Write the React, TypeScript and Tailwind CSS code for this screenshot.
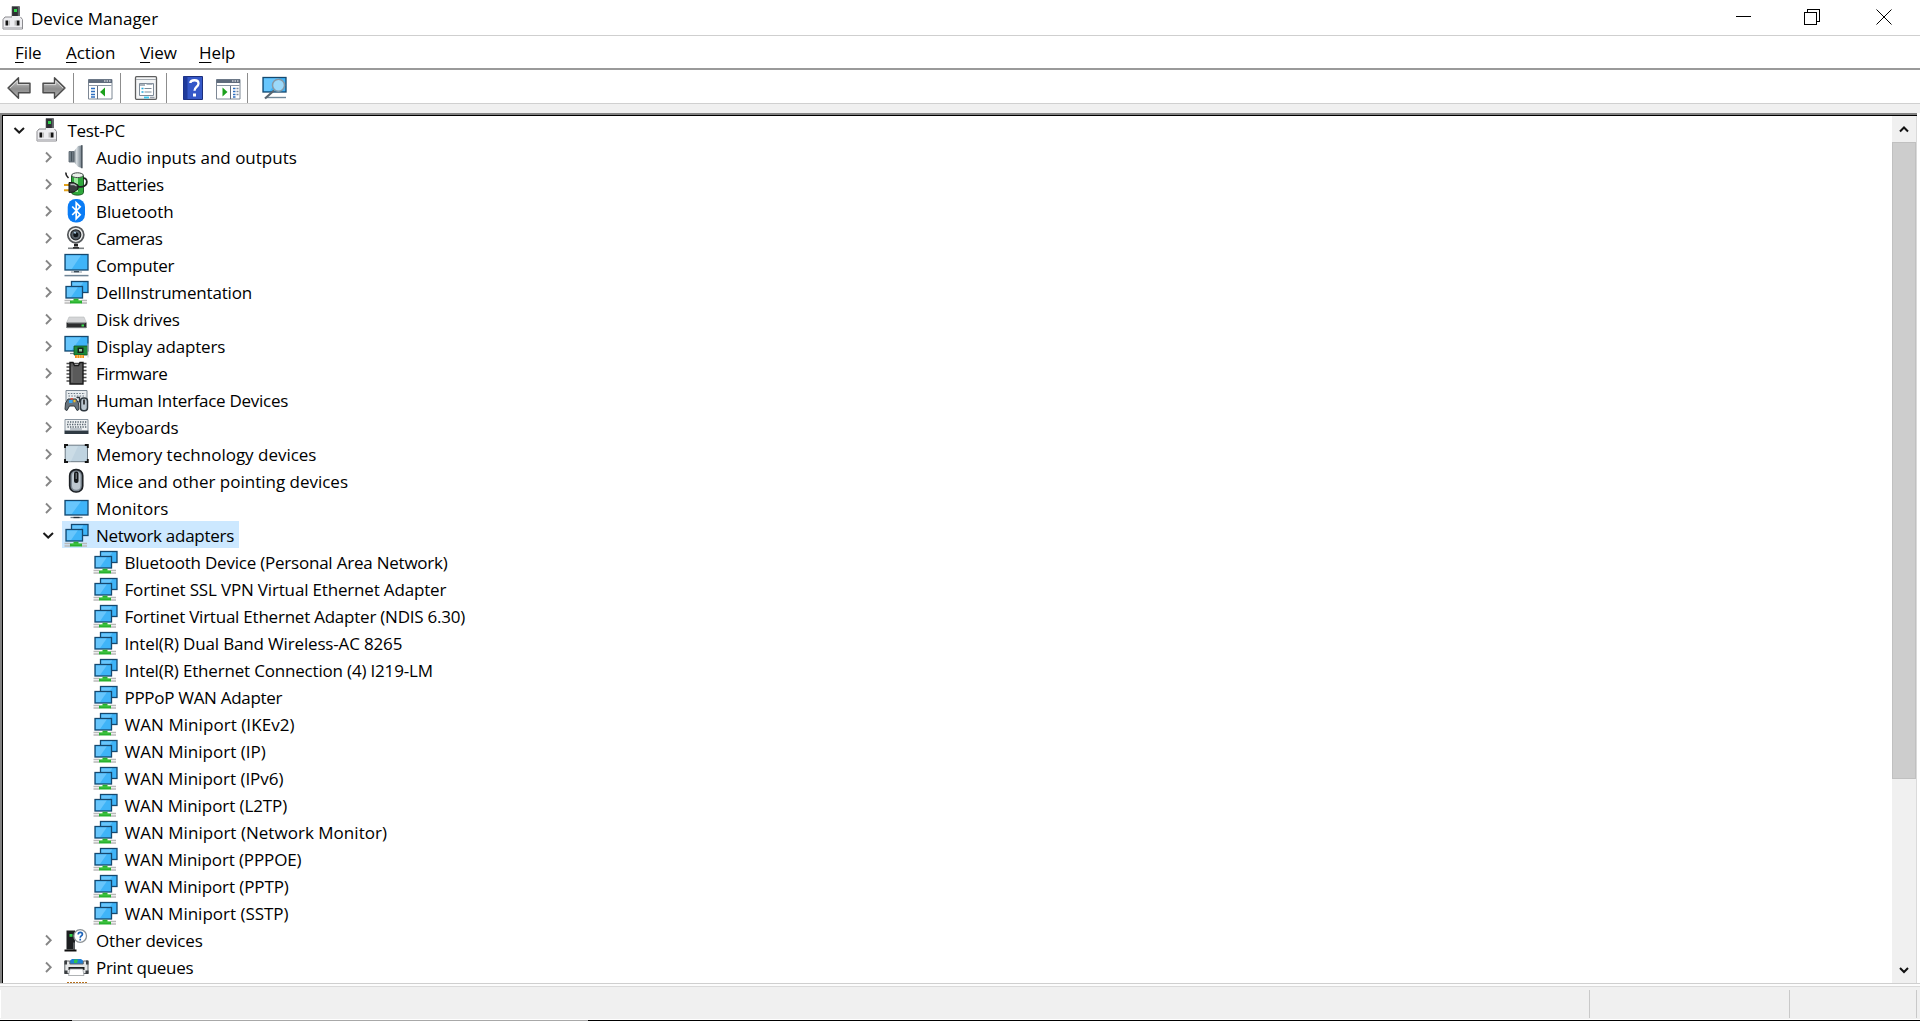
import React from 'react';

interface TreeItem {
  label: string;
  icon: React.FC;
  level: number;
  tracking: number;
  open?: boolean;
  selected?: boolean;
}

const Svg: React.FC<{ children: React.ReactNode; className?: string }> = ({ children, className = '' }) => (
  <svg viewBox="0 0 24 24" className={`h-6 w-6 shrink-0 overflow-visible ${className}`} fill="none">
    {children}
  </svg>
);

const PcIcon = () => (
  <Svg>
    <path d="M11 0.5h7.500v10.500h-7.500z" fill="#2e3033" stroke="#55585c" strokeWidth="0.6" />
    <path d="M16.800 1h1.700v9.500h-1.700z" fill="#5f6368" />
    <rect x="13" y="3" width="3" height="3" fill="#2fd24a" />
    <path d="M3.500 11h7.500v-1h8l2 2.500v10.500h-19v-9.500z" fill="#ededf0" />
    <path d="M11 11H4l-2 2.500v9.500h19.500v-9.500L19.500 11" stroke="#8b8b8f" />
    <path d="M2.500 21h18.500v2h-18.500z" fill="#c4c4c8" />
    <path d="M4.500 14.500h2.500v5h-2.500zM15.500 14.500h3v5h-3z" fill="#151515" />
    <path d="M7 14.500h2v5H7zM13.500 14.500h2v5h-2z" fill="#bdbdbd" />
  </Svg>
);

const AudioIcon = () => (
  <Svg>
    <defs>
      <linearGradient id="cone" x1="0" x2="1">
        <stop offset="0" stopColor="#69757e" />
        <stop offset="0.35" stopColor="#d8dee2" />
        <stop offset="0.7" stopColor="#98a3ab" />
        <stop offset="1" stopColor="#6d7881" />
      </linearGradient>
    </defs>
    <path d="M5 6.500h5v10.500H5z" fill="#7c8992" stroke="#55616a" strokeWidth="0.8" />
    <path d="M6.800 7h1.500v9.500H6.800z" fill="#46525b" />
    <path d="M9.500 7L14 1l4.300-.8v23l-4.300-1.500L9.500 16.500z" fill="url(#cone)" />
    <path d="M17.800 0.300v23" stroke="#4a545c" strokeWidth="1.400" />
    <path d="M9.800 7v9.500" stroke="#5a656d" strokeWidth="1" />
  </Svg>
);

const BatteryIcon = () => (
  <Svg>
    <path d="M7.500 4c0-3.500 12-3.500 12 0v16.500c0 3.500-12 3.500-12 0z" fill="#2fa83c" stroke="#1c5c25" />
    <path d="M10 5h4v15h-4z" fill="#9be89d" />
    <ellipse cx="13.500" cy="3.200" rx="5.800" ry="2.400" fill="#e8f1e8" stroke="#474b4d" />
    <path d="M14 14.500c5 1.500 9-1 8.800-5C22.600 6.500 21 6 19 6.200" stroke="#222" strokeWidth="1.800" />
    <path d="M2 0.500c-.5 2 0 3 2.500 5.500" stroke="#222" strokeWidth="1.500" />
    <path d="M0 13h5.500M0 18.200h5.500" stroke="#e2a11b" strokeWidth="2" />
    <path d="M5 10.500l5 .3 4 2.200v4l-4 3-5 .5z" fill="#3a3d3f" stroke="#151515" />
    <path d="M6.500 12.500h3.500l2.500 1.500" stroke="#b8bcbf" strokeWidth="1.300" />
  </Svg>
);

const BluetoothIcon = () => (
  <Svg>
    <rect x="3.700" y="0" width="17.300" height="23.500" rx="8" fill="#0a7cf5" />
    <path d="M8.200 7.500l8 8.200-4 4V3.800l4 4-8 8.200" stroke="#fff" strokeWidth="1.700" />
  </Svg>
);

const CameraIcon = () => (
  <Svg>
    <circle cx="11.800" cy="8.800" r="8" fill="#eceded" stroke="#55585b" strokeWidth="1.700" />
    <circle cx="11.800" cy="8.800" r="5" fill="#59626a" stroke="#25282b" strokeWidth="1.200" />
    <circle cx="11.800" cy="8.800" r="2.500" fill="#101418" />
    <path d="M10 6.500l2 .5" stroke="#a9cbe4" strokeWidth="1.500" />
    <path d="M10 17.800h4v2.700h-4z" fill="#222" />
    <path d="M4 22.300h16" stroke="#7c8083" strokeWidth="1.600" />
    <path d="M9 21.800h6" stroke="#222" strokeWidth="1.400" />
  </Svg>
);

const Screen: React.FC<{ x: number; y: number; w: number; h: number }> = ({ x, y, w, h }) => (
  <g>
    <rect x={x} y={y} width={w} height={h} fill="#3fb4f8" stroke="#15486e" strokeWidth="1.300" />
    <path d={`M${x + 1} ${y + 1}h${w * 0.65}l${-w * 0.4} ${h - 2}H${x + 1}z`} fill="#68c6fc" />
  </g>
);

const ComputerIcon = () => (
  <Svg>
    <Screen x={1} y={1.500} w={23} h={15.500} />
    <path d="M7 19h11" stroke="#8a97a1" strokeWidth="1" />
    <path d="M10 18.700h5" stroke="#2f3f4b" strokeWidth="1.200" />
    <path d="M0.500 22.600h24" stroke="#6f8496" strokeWidth="1.500" />
  </Svg>
);

const MonitorIcon = () => (
  <Svg>
    <Screen x={1} y={4.500} w={23} h={14.500} />
    <path d="M6.500 21.500h12" stroke="#75828c" strokeWidth="1.300" />
    <path d="M9.500 21.500h6" stroke="#29343c" strokeWidth="1.300" />
  </Svg>
);

const NetworkIcon = () => (
  <Svg>
    <Screen x={7.500} y={1.500} w={16.500} h={11} />
    <Screen x={2} y={6.500} w={16.500} h={11.500} />
    <path d="M0.500 20.500h6M17.500 20.500h5.500M0.500 23h6M17.500 23h5.500" stroke="#b9b9b9" strokeWidth="1.300" />
    <path d="M9.500 18.700h5v1.800H18v3H6v-3h3.500z" fill="#27b22f" />
    <path d="M7.500 21h9" stroke="#55d04f" strokeWidth="0.800" />
  </Svg>
);

const DiskIcon = () => (
  <Svg>
    <path d="M5 10h15l2.500 6H2.500z" fill="#d5d6d8" stroke="#b6b8ba" strokeWidth="0.600" />
    <path d="M2.500 15.700h20V21h-20z" fill="#2b2d2e" />
    <path d="M3 20.700h19" stroke="#86898b" strokeWidth="1" />
    <path d="M4 16.500h17" stroke="#5a5d5f" strokeWidth="0.800" />
    <rect x="17.500" y="17.500" width="2.500" height="2" fill="#3ce04e" />
  </Svg>
);

const DisplayIcon = () => (
  <Svg>
    <Screen x={1} y={2.500} w={23} h={14.500} />
    <path d="M6 19.500h5" stroke="#7f8c96" strokeWidth="1.200" />
    <path d="M10 12h13.500v9H10z" fill="#1e8a3a" stroke="#0d4f1f" strokeWidth="0.800" />
    <path d="M13.500 13.500h6v5.500h-6z" fill="#16241a" />
    <path d="M15 15h3v2.500h-3z" fill="#8fc69d" />
    <path d="M11 21h9v3h-9z" fill="#f08b1d" />
    <path d="M13.200 21v3M15.700 21v3M18 21v3" stroke="#fff0a8" strokeWidth="0.700" />
    <path d="M24 9.500v14" stroke="#c7c7c7" strokeWidth="1" />
  </Svg>
);

const FirmwareIcon = () => (
  <Svg>
    <path d="M2.500 2.500h20M2.500 6h20M2.500 9.500h20M2.500 13h20M2.500 16.500h20M2.500 20h20" stroke="#4f4f4f" strokeWidth="1.600" />
    <path d="M6 1.500h3l1.500 3h4l1.500-3h3V23H6z" fill="#5a5a5a" stroke="#191919" strokeWidth="1.400" />
    <path d="M8 5.500v15.500" stroke="#777" strokeWidth="1" />
  </Svg>
);

const HidIcon = () => (
  <Svg>
    <path d="M2 2.500h21v11H2z" fill="#e9edf0" stroke="#7b8792" />
    <path d="M4 5.500h17M4.500 8h17" stroke="#6b7883" strokeWidth="1.200" strokeDasharray="1.500 1.300" />
    <path d="M4 11h8l2.500 4 .5 6.500-2 1L10.500 18h-5L3 22.500l-2-1L1.500 15z" fill="#69747d" stroke="#2e373e" />
    <path d="M5 13.500h3.500" stroke="#38a7f0" strokeWidth="3" />
    <path d="M9.500 13h2" stroke="#f2bf2a" strokeWidth="2.500" />
    <path d="M6.500 10.800h2.500" stroke="#e8543b" strokeWidth="1.500" />
    <path d="M12.500 9.500h3v5" stroke="#2e373e" strokeWidth="1.300" />
    <rect x="16.500" y="10" width="7" height="12.700" rx="3" fill="#bac6cf" stroke="#2e373e" strokeWidth="1.500" />
    <path d="M20 11.500v5" stroke="#111" strokeWidth="1.500" />
  </Svg>
);

const KeyboardIcon = () => (
  <Svg>
    <path d="M1 4.500h23v11.500H1z" fill="#eef1f3" stroke="#8995a0" />
    <path d="M3.500 7h19" stroke="#56636e" strokeWidth="1.300" strokeDasharray="1.300 1.200" />
    <path d="M3 9.500h19" stroke="#56636e" strokeWidth="1.300" strokeDasharray="1.300 1.200" />
    <path d="M3.500 12h19" stroke="#56636e" strokeWidth="1.300" strokeDasharray="1.300 1.200" />
    <path d="M6 14h12" stroke="#8995a0" strokeWidth="1" />
    <path d="M0.500 15.700h24v3.300h-24z" fill="#2f3a43" />
  </Svg>
);

const MemoryIcon = () => (
  <Svg>
    <rect x="1.200" y="3.200" width="22.300" height="16.500" rx="1" fill="#bfd3e0" stroke="#6f7c86" />
    <path d="M2 4.200h12L7 19.200H2z" fill="#cbdce6" />
    <path d="M1 6V3h3M20.800 3h3v3M1 17v3h3M20.800 20h3v-3" stroke="#141414" strokeWidth="1.900" />
  </Svg>
);

const MouseIcon = () => (
  <Svg>
    <rect x="5.700" y="0.700" width="13" height="22.300" rx="6" fill="#7e8993" stroke="#1c2024" strokeWidth="1.700" />
    <rect x="8" y="2.700" width="8.500" height="18" rx="4" fill="#bdc7cf" />
    <rect x="10" y="2.500" width="4.500" height="11.500" rx="2" fill="#15181a" />
    <path d="M12.200 4v6" stroke="#8c969d" strokeWidth="1" />
  </Svg>
);

const OtherIcon = () => (
  <Svg>
    <path d="M2.500 2.500h8.500v19H2.500z" fill="#1c1e20" />
    <path d="M9 14.500h2v7H9z" fill="#5a5e61" />
    <path d="M0.500 21.500h12v2h-12z" fill="#0f0f0f" />
    <rect x="5.500" y="6" width="3" height="2.800" fill="#2fd24a" />
    <circle cx="16.200" cy="8" r="6.300" fill="#fff" stroke="#8c9296" strokeWidth="1.300" />
    <path d="M14.200 6.500c0-3 4.200-2.700 4.200-.3 0 1.700-2.200 1.800-2.200 3.500M16.200 10.800v1.700" stroke="#1c63b8" strokeWidth="1.700" />
  </Svg>
);

const PrinterIcon = () => (
  <Svg>
    <path d="M6 5.500L8 4h9l2 1.500V10H6z" fill="#1f7fd6" />
    <path d="M10 4.500h4L13 8h-3z" fill="#2fc44a" />
    <path d="M0.800 6h5v3h13.500V6h4.700v12.500h-23.200z" fill="#e5e7e8" stroke="#5e6468" strokeWidth="1" />
    <path d="M0.500 5.500h2.500v4H.5zM22 5.500h2.500v4H22zM0.500 15.500h3v3.500h-3zM21.500 15.500h3v3.500h-3z" fill="#3a3e41" />
    <path d="M4.500 12h16v3h-16z" fill="#1d1f20" />
    <path d="M6 14l-1.500 6.500h15.500L18.800 14z" fill="#fff" stroke="#9a9ea1" strokeWidth="0.800" />
  </Svg>
);

const items: TreeItem[] = [
  { label: 'Test-PC', icon: PcIcon, level: 0, tracking: -0.3, open: true },
  { label: 'Audio inputs and outputs', icon: AudioIcon, level: 1, tracking: -0.01 },
  { label: 'Batteries', icon: BatteryIcon, level: 1, tracking: -0.37 },
  { label: 'Bluetooth', icon: BluetoothIcon, level: 1, tracking: -0.08 },
  { label: 'Cameras', icon: CameraIcon, level: 1, tracking: -0.52 },
  { label: 'Computer', icon: ComputerIcon, level: 1, tracking: -0.22 },
  { label: 'DellInstrumentation', icon: NetworkIcon, level: 1, tracking: -0.18 },
  { label: 'Disk drives', icon: DiskIcon, level: 1, tracking: -0.2 },
  { label: 'Display adapters', icon: DisplayIcon, level: 1, tracking: -0.19 },
  { label: 'Firmware', icon: FirmwareIcon, level: 1, tracking: -0.45 },
  { label: 'Human Interface Devices', icon: HidIcon, level: 1, tracking: -0.28 },
  { label: 'Keyboards', icon: KeyboardIcon, level: 1, tracking: -0.17 },
  { label: 'Memory technology devices', icon: MemoryIcon, level: 1, tracking: -0.01 },
  { label: 'Mice and other pointing devices', icon: MouseIcon, level: 1, tracking: -0.01 },
  { label: 'Monitors', icon: MonitorIcon, level: 1, tracking: 0.12 },
  { label: 'Network adapters', icon: NetworkIcon, level: 1, tracking: -0.28, open: true, selected: true },
  { label: 'Bluetooth Device (Personal Area Network)', icon: NetworkIcon, level: 2, tracking: -0.22 },
  { label: 'Fortinet SSL VPN Virtual Ethernet Adapter', icon: NetworkIcon, level: 2, tracking: -0.17 },
  { label: 'Fortinet Virtual Ethernet Adapter (NDIS 6.30)', icon: NetworkIcon, level: 2, tracking: -0.23 },
  { label: 'Intel(R) Dual Band Wireless-AC 8265', icon: NetworkIcon, level: 2, tracking: -0.16 },
  { label: 'Intel(R) Ethernet Connection (4) I219-LM', icon: NetworkIcon, level: 2, tracking: -0.18 },
  { label: 'PPPoP WAN Adapter', icon: NetworkIcon, level: 2, tracking: -0.3 },
  { label: 'WAN Miniport (IKEv2)', icon: NetworkIcon, level: 2, tracking: 0.06 },
  { label: 'WAN Miniport (IP)', icon: NetworkIcon, level: 2, tracking: 0.02 },
  { label: 'WAN Miniport (IPv6)', icon: NetworkIcon, level: 2, tracking: -0.01 },
  { label: 'WAN Miniport (L2TP)', icon: NetworkIcon, level: 2, tracking: -0.08 },
  { label: 'WAN Miniport (Network Monitor)', icon: NetworkIcon, level: 2, tracking: 0.03 },
  { label: 'WAN Miniport (PPPOE)', icon: NetworkIcon, level: 2, tracking: -0.12 },
  { label: 'WAN Miniport (PPTP)', icon: NetworkIcon, level: 2, tracking: -0.1 },
  { label: 'WAN Miniport (SSTP)', icon: NetworkIcon, level: 2, tracking: -0.01 },
  { label: 'Other devices', icon: OtherIcon, level: 1, tracking: -0.2 },
  { label: 'Print queues', icon: PrinterIcon, level: 1, tracking: -0.3 },
];

const indents = ['pl-[8px]', 'pl-[36.5px]', 'pl-[65.5px]'];

const TreeRow: React.FC<{ item: TreeItem }> = ({ item }) => {
  const Icon = item.icon;
  return (
    <div className={`flex h-[27px] shrink-0 items-center ${indents[item.level]}`}>
      <div className="flex w-[22px] justify-center">
        {item.level < 2 && (
          <svg viewBox="0 0 14 14" className="-ml-[6px] h-3.5 w-3.5" fill="none">
            {item.open ? (
              <path d="M2.500 5l4.700 4.500L12 5" stroke="#1a1a1a" strokeWidth="2" />
            ) : (
              <path d="M5 2.500l4.700 4.700L5 12" stroke="#868686" strokeWidth="1.900" />
            )}
          </svg>
        )}
      </div>
      <div className={`flex h-full items-center pr-[5px] pl-[2px] ${item.selected ? 'bg-[#cce8ff]' : ''}`}>
        <div className="mt-px">
          <Icon />
        </div>
        <span
          className={`mt-0.5 whitespace-pre ${item.level === 2 ? 'ml-[8px]' : 'ml-[8.5px]'}`}
          style={{ letterSpacing: item.tracking }}
        >
          {item.label}
        </span>
      </div>
    </div>
  );
};

const MenuItem: React.FC<{ label: string; className: string }> = ({ label, className }) => (
  <div className={`whitespace-pre ${className}`}>
    <span className="underline decoration-1 underline-offset-[3px]">{label[0]}</span>
    {label.slice(1)}
  </div>
);

const Separator = () => <div className="h-[30px] w-px shrink-0 bg-[#8d8d8d]" />;

const Arrow: React.FC<{ flip?: boolean }> = ({ flip }) => (
  <svg viewBox="0 0 24 24" className={`h-6 w-6 shrink-0 ${flip ? '-scale-x-100' : ''}`} fill="none">
    <defs>
      <linearGradient id="arrow" x1="0" y1="0" x2="0" y2="1">
        <stop offset="0" stopColor="#c9c9c9" />
        <stop offset="0.55" stopColor="#8d8d8d" />
        <stop offset="1" stopColor="#b3b3b3" />
      </linearGradient>
    </defs>
    <path d="M1 12L11.500 1.800V7.300H23v9.400H11.500v5.500z" fill="url(#arrow)" stroke="#4c4c4c" strokeWidth="1.400" strokeLinejoin="round" />
    <path d="M3 12l7.300-7V8.600h11.500" stroke="#e4e4e4" strokeWidth="0.800" />
  </svg>
);

const ConsoleIcon: React.FC<{ right?: boolean }> = ({ right }) => (
  <Svg>
    <path d="M0.500 3.500h23.500v19.500H.5z" fill="#fff" stroke="#7d8794" />
    <path d="M0.500 3.500h23.500v3.500H.5z" fill="#5f6b7c" />
    <path d="M16 5h1.500M18.500 5H20M21 5h1.500" stroke="#fff" strokeWidth="1.200" />
    <path d="M1 9.500h22.500" stroke="#8b95a3" strokeWidth="1" />
    {right ? (
      <>
        <path d="M14.500 10v13" stroke="#5f6b7c" />
        <path d="M17 12.500h2.500M17 15.500h2.500M17 18.500h2.500M17 21h2.500" stroke="#2f6fc0" strokeWidth="1.300" />
        <path d="M20.500 12.500h2M20.500 15.500h2M20.500 18.500h2" stroke="#7f8b99" strokeWidth="1.300" />
        <path d="M6.500 11.500v9L11.500 16z" fill="#1ba01b" />
      </>
    ) : (
      <>
        <path d="M9.500 10v13" stroke="#5f6b7c" />
        <path d="M3 12.500h4M3 15.500h4M3 18.500h4M3 21h4" stroke="#2f6fc0" strokeWidth="1.300" />
        <path d="M17 11.500v9L12 16z" fill="#1ba01b" />
      </>
    )}
  </Svg>
);

const PropertiesIcon = () => (
  <Svg>
    <rect x="1.500" y="0.700" width="21" height="22.600" rx="1" fill="#f5f6f7" stroke="#5f5f5f" strokeWidth="1.300" />
    <path d="M2 3.500h20" stroke="#a7adb3" />
    <path d="M5.500 7.500h14v12h-14z" fill="#fff" stroke="#7f8b98" />
    <path d="M6 9h5M12.500 8h6" stroke="#8f99a5" strokeWidth="1.500" />
    <path d="M7.500 12.500h2M7.500 16h2" stroke="#1fa8dc" strokeWidth="1.500" />
    <path d="M10.500 12.500h7M10.500 16h7" stroke="#7f8b98" strokeWidth="1.200" />
    <path d="M10 21.500h5" stroke="#35c6f0" strokeWidth="1.800" />
    <path d="M16 21.500h4.500" stroke="#9aa3ac" strokeWidth="1.500" />
  </Svg>
);

const HelpIcon = () => (
  <Svg>
    <path d="M2.500 0.500h19v23H2.500z" fill="#3558c8" stroke="#1c2f7c" />
    <path d="M2.500 0.500h4v23h-4z" fill="#1f3a9b" />
    <path d="M9.300 7C9.500 3.500 17.500 3 17.500 7.500c0 3.300-4 3.600-4 7.200" stroke="#fff" strokeWidth="2.300" />
    <rect x="12" y="17.500" width="3" height="3" fill="#fff" />
  </Svg>
);

const ScanIcon = () => (
  <Svg>
    <Screen x={1} y={1.500} w={23} h={14.500} />
    <path d="M4 21.500h20" stroke="#6f8797" strokeWidth="1.400" />
    <path d="M12 14.500L3 22.500" stroke="#596570" strokeWidth="2.200" />
    <circle cx="16.500" cy="9.300" r="6" fill="#9bd9fa" stroke="#8799a6" strokeWidth="1.500" />
  </Svg>
);

export default function App() {
  return (
    <div className="flex h-[1021px] w-[1920px] flex-col overflow-hidden bg-white font-['Open_Sans','Noto_Sans',sans-serif] text-[17px] leading-[27px] text-black">
      {/* title bar */}
      <div className="flex h-[36px] shrink-0 items-center justify-between border-b border-[#cfcfcf]">
        <div className="flex items-center pl-[1px]">
          <PcIcon />
          <span className="mt-0.5 ml-[6px]">Device Manager</span>
        </div>
        <div className="flex items-center pb-0.5">
          <svg viewBox="0 0 16 16" className="mr-[53px] h-4 w-4" shapeRendering="crispEdges">
            <path d="M0.500 7.500h15" stroke="#000" />
          </svg>
          <svg viewBox="0 0 16 16" className="mr-[56px] h-4 w-4" fill="none" shapeRendering="crispEdges">
            <path d="M0.500 3.500h11.500v11.500H.5zM3.500 3V.5h11.500V12h-3" stroke="#000" />
          </svg>
          <svg viewBox="0 0 16 16" className="mr-[28px] h-4 w-4" fill="none">
            <path d="M0.500 0.500l15 15M15.500 0.500l-15 15" stroke="#000" />
          </svg>
        </div>
      </div>

      {/* menu */}
      <div className="flex h-[34px] shrink-0 items-center border-b-2 border-[#9a9a9a] tracking-[-0.1px]">
        <MenuItem label="File" className="ml-[15px] w-[51px]" />
        <MenuItem label="Action" className="w-[74px]" />
        <MenuItem label="View" className="w-[59px]" />
        <MenuItem label="Help" className="" />
      </div>

      {/* toolbar */}
      <div className="flex h-[34px] shrink-0 items-center border-b border-[#d0d0d0] pt-0.5">
        <div className="ml-[7px] flex w-[66px] gap-[11px]">
          <Arrow />
          <Arrow flip />
        </div>
        <Separator />
        <div className="flex w-[46px] pl-[14px]">
          <ConsoleIcon />
        </div>
        <Separator />
        <div className="flex w-[45px] pl-[13px]">
          <PropertiesIcon />
        </div>
        <Separator />
        <div className="flex w-[80px] gap-[11px] pl-[14px]">
          <HelpIcon />
          <ConsoleIcon right />
        </div>
        <Separator />
        <div className="ml-[14px]">
          <ScanIcon />
        </div>
      </div>
      <div className="h-[9px] shrink-0 bg-[#f0f0f0]" />

      {/* device tree */}
      <div className="mr-[3px] flex h-[870px] shrink-0 border-t-2 border-l-2 border-[#828282]">
        <div className="flex min-w-0 flex-1 border-t border-l border-black">
          <div className="flex min-w-0 flex-1 flex-col overflow-hidden">
            {items.map((item) => (
              <TreeRow key={item.label} item={item} />
            ))}
            {/* top edge of the next, cut-off icon */}
            <svg viewBox="0 0 20 1" className="mt-0.5 ml-16 h-px w-5 shrink-0">
              <path d="M0 0.500h20" stroke="#b5701d" strokeDasharray="2 1" />
            </svg>
          </div>
          <div className="flex w-6 shrink-0 flex-col bg-[#f0f0f0]">
            <div className="flex h-[26px] items-center justify-center">
              <svg viewBox="0 0 10 8" className="h-2 w-2.5" fill="none">
                <path d="M1 6.500l4-4 4 4" stroke="#111" strokeWidth="2" />
              </svg>
            </div>
            <div className="h-[637px] border border-[#c0c0c0] bg-[#cdcdcd]" />
            <div className="mt-auto flex h-[27px] items-center justify-center">
              <svg viewBox="0 0 10 8" className="h-2 w-2.5" fill="none">
                <path d="M1 2l4 4 4-4" stroke="#111" strokeWidth="2" />
              </svg>
            </div>
          </div>
          <div className="w-px shrink-0 bg-[#dadada]" />
        </div>
      </div>

      {/* status bar */}
      <div className="flex h-[38px] shrink-0 flex-col border-t border-[#cfcfcf] bg-[#f0f0f0]">
        <div className="h-[2px] bg-[#fcfcfc]" />
        <div className="h-px bg-[#dadada]" />
        <div className="mt-[3px] flex flex-1 border-l border-white">
          <div className="w-[1589px] border-r border-[#c9c9c9]" />
          <div className="w-[200px] border-r border-[#c9c9c9]" />
          <div className="w-[127px] border-r border-[#c9c9c9]" />
        </div>
        <div className="mt-px h-px bg-white" />
        <div className="flex h-px bg-black">
          <div className="ml-[72px] w-[516px] bg-[#a8a8a8]" />
        </div>
      </div>
    </div>
  );
}
